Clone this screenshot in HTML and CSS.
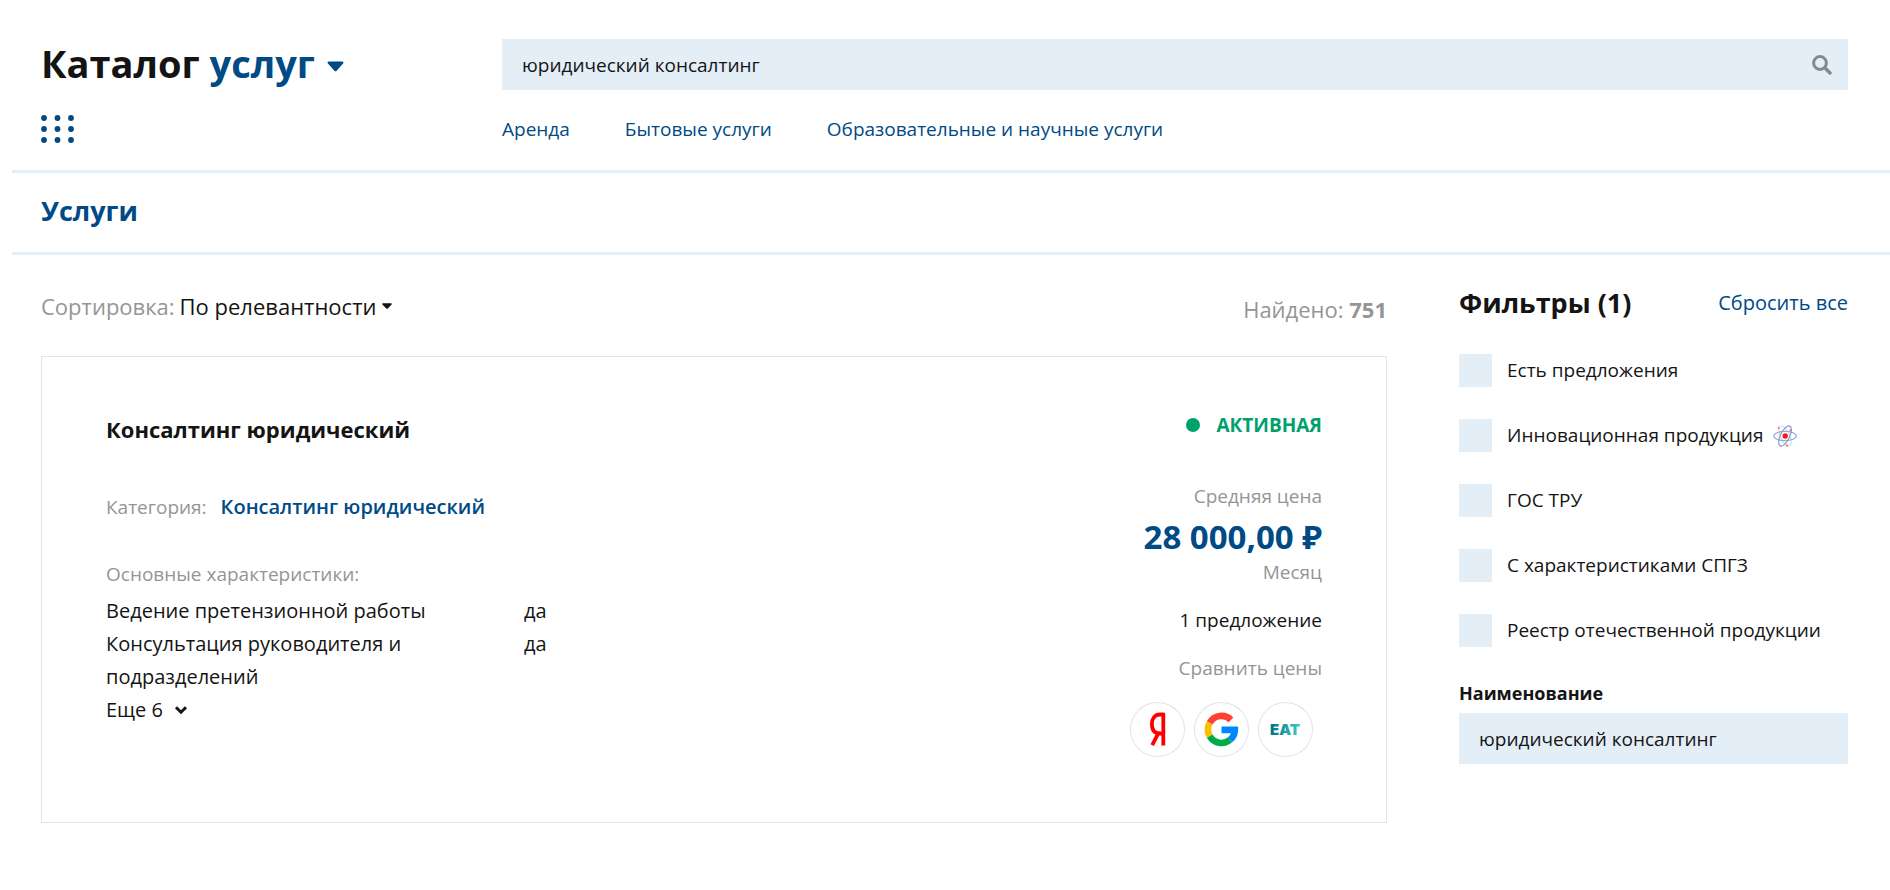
FILE: index.html
```
<!DOCTYPE html>
<html lang="ru">
<head>
  <meta charset="utf-8">
  <meta name="viewport" content="width=device-width, initial-scale=1">
  <title>Каталог услуг</title>
  <link rel="stylesheet" href="styles.css">
</head>
<body>
  <header class="header">
    <button class="brand" type="button">
      <span>Каталог <span class="brand-accent">услуг</span></span>
      <svg class="brand-caret" viewBox="0 0 17 11" aria-hidden="true"><path d="M1.8 .5h13.4c1.2 0 1.7 1.2.9 2L9.6 9.8c-.6.7-1.6.7-2.2 0L.9 2.5C.1 1.7.6.5 1.8.5z" fill="currentColor"/></svg>
    </button>
    <form class="search" role="search">
      <input class="search-input" type="search" aria-label="Поиск" value="юридический консалтинг">
      <button class="search-button" type="button" aria-label="Найти">
        <svg class="search-icon" viewBox="0 0 20 20" aria-hidden="true"><circle cx="8" cy="8" r="6.4" fill="none" stroke="currentColor" stroke-width="3"/><path d="M13 13l5 5" stroke="currentColor" stroke-width="3.4" stroke-linecap="round"/></svg>
      </button>
    </form>
    <button class="menu-button" type="button" aria-label="Все категории">
      <svg class="menu-icon" viewBox="0 0 33 28" fill="currentColor" aria-hidden="true">
        <circle cx="3" cy="3" r="2.900"/><circle cx="16.500" cy="3" r="2.900"/><circle cx="30" cy="3" r="2.900"/>
        <circle cx="3" cy="14" r="2.900"/><circle cx="16.500" cy="14" r="2.900"/><circle cx="30" cy="14" r="2.900"/>
        <circle cx="3" cy="25" r="2.900"/><circle cx="16.500" cy="25" r="2.900"/><circle cx="30" cy="25" r="2.900"/>
      </svg>
    </button>
    <nav class="nav">
      <a href="#">Аренда</a>
      <a href="#">Бытовые услуги</a>
      <a href="#">Образовательные и научные услуги</a>
    </nav>
  </header>

  <section class="section-bar">
    <h1 class="section-title">Услуги</h1>
  </section>

  <main class="content">
    <section class="results">
      <div class="toolbar">
        <div class="sort">
          <label class="muted" for="sort">Сортировка:</label>
          <select class="sort-select" id="sort">
            <option>По релевантности</option>
          </select>
          <svg class="sort-caret" viewBox="0 0 10 6" aria-hidden="true"><path d="M1 .3h8c.8 0 1.1.8.6 1.3L5.8 5.4c-.4.4-1.1.4-1.5 0L.4 1.6C-.1 1.1.2.3 1 .3z" fill="currentColor"/></svg>
        </div>
        <div class="found muted">Найдено: <strong>751</strong></div>
      </div>

      <article class="card">
        <div class="card-main">
          <h2 class="card-title">Консалтинг юридический</h2>
          <p class="category"><span class="muted">Категория:</span> <a class="category-link" href="#">Консалтинг юридический</a></p>
          <table class="specs">
            <caption class="muted">Основные характеристики:</caption>
            <tbody>
              <tr><th scope="row">Ведение претензионной работы</th><td>да</td></tr>
              <tr><th scope="row">Консультация руководителя и подразделений</th><td>да</td></tr>
            </tbody>
          </table>
          <button class="more" type="button">Еще 6
            <svg class="more-icon" viewBox="0 0 14 10" aria-hidden="true"><path d="M2 2.300L7 7.200 12 2.300" fill="none" stroke="currentColor" stroke-width="3"/></svg>
          </button>
        </div>

        <div class="card-side">
          <p class="status">АКТИВНАЯ</p>
          <p class="muted">Средняя цена</p>
          <p class="price">28 000,00 ₽</p>
          <p class="unit muted">Месяц</p>
          <p class="offers">1 предложение</p>
          <p class="muted">Сравнить цены</p>
          <div class="compare">
            <a class="compare-link" href="#" aria-label="Яндекс">
              <svg class="compare-logo" viewBox="0 0 55 55" aria-hidden="true"><path d="M33.300 10.800V43.600M33.500 12.500H30C24.800 12.500 21.900 16.500 21.900 22C21.900 28.500 25.200 31.500 30 31.500H33.500M28.200 31.500L22.200 43.200" fill="none" stroke="#f00" stroke-width="3.800"/></svg>
            </a>
            <a class="compare-link" href="#" aria-label="Google">
              <svg class="compare-logo" viewBox="0 0 55 55" aria-hidden="true">
                <g fill="none" stroke-width="6.600">
                  <path d="M37 17.900A13.400 13.400 0 0 0 15.700 20.900" stroke="#ff4131"/>
                  <path d="M15.700 20.900A13.400 13.400 0 0 0 15.700 34.100" stroke="#fdbd00"/>
                  <path d="M15.700 34.100A13.400 13.400 0 0 0 36 37.800" stroke="#00ac47"/>
                  <path d="M36 37.800C39.200 35.200 40.800 31.500 40.800 27.900H27.500" stroke="#0086ff"/>
                </g>
              </svg>
            </a>
            <a class="compare-link" href="#" aria-label="ЕАТ">
              <svg class="compare-logo" viewBox="0 0 55 55" aria-hidden="true">
                <defs><linearGradient id="eat"><stop offset="0" stop-color="#046f85"/><stop offset="1" stop-color="#3dccc4"/></linearGradient></defs>
                <text x="27" y="33" class="eat" fill="url(#eat)">ЕАТ</text>
              </svg>
            </a>
          </div>
        </div>
      </article>
    </section>

    <aside class="filters">
      <div class="filters-head">
        <h2 class="filters-title">Фильтры (1)</h2>
        <a class="reset" href="#">Сбросить все</a>
      </div>
      <div class="checks">
        <label class="check"><input type="checkbox">Есть предложения</label>
        <label class="check"><input type="checkbox">Инновационная продукция
          <svg class="atom" viewBox="0 0 24 24" aria-hidden="true">
            <g fill="none" stroke-width="1.200">
              <ellipse cx="12" cy="12" rx="4.600" ry="11" transform="rotate(-24 12 12)" stroke="#cfdeee"/>
              <ellipse cx="12" cy="12" rx="11.200" ry="4.600" stroke="#8fabcd"/>
              <ellipse cx="12" cy="12" rx="4.600" ry="11" transform="rotate(26 12 12)" stroke="#7f9fc6"/>
            </g>
            <circle cx="12.200" cy="12" r="2.700" fill="#f9160f"/>
            <circle cx="5.800" cy="4" r="1" fill="#f66"/><circle cx="17.500" cy="6" r="1" fill="#f66"/><circle cx="14" cy="21.500" r="1" fill="#f44"/>
          </svg>
        </label>
        <label class="check"><input type="checkbox">ГОС ТРУ</label>
        <label class="check"><input type="checkbox">С характеристиками СПГЗ</label>
        <label class="check"><input type="checkbox">Реестр отечественной продукции</label>
      </div>
      <label class="field-label" for="name">Наименование</label>
      <input class="field-input" id="name" type="text" value="юридический консалтинг">
    </aside>
  </main>
</body>
</html>
```
FILE: styles.css
```
*,
*::before,
*::after {
  box-sizing: border-box;
}

:root {
  --ink: #141414;
  --blue: #004a86;
  --tint: #e4eef7;
  --grey: #959595;
}

body {
  margin: 0;
  background: #fff;
  color: var(--ink);
  font: 19px/26px "Open Sans", "Noto Sans", sans-serif;
}

h1,
h2,
p {
  margin: 0;
}

a {
  color: var(--blue);
  text-decoration: none;
}

button,
input,
select {
  padding: 0;
  border: 0;
  border-radius: 0;
  background: none;
  color: inherit;
  font: inherit;
}

button,
select {
  cursor: pointer;
}

svg {
  display: block;
  flex: none;
}

.muted {
  color: var(--grey);
}

/* Header */

.header {
  display: grid;
  grid-template-columns: 461px 1fr;
  align-items: center;
  row-gap: 25px;
  padding: 39px 42px 27px 41px;
}

.brand {
  display: flex;
  align-items: center;
  gap: 12px;
  justify-self: start;
  padding-bottom: 4px;
  font-size: 38px;
  font-weight: 700;
  line-height: 46px;
}

.brand-accent,
.brand-caret {
  color: var(--blue);
}

.brand-caret {
  width: 17px;
  height: 11px;
  margin-top: 8px;
}

.search {
  display: flex;
  background: var(--tint);
}

.search-input {
  flex: 1;
  min-width: 0;
  height: 51px;
  padding-left: 20px;
  appearance: none;
}

.search-button {
  padding: 0 16px;
  color: #85898d;
}

.search-icon {
  width: 20px;
  height: 20px;
}

.menu-button {
  justify-self: start;
  color: var(--blue);
}

.menu-icon {
  width: 33px;
  height: 28px;
}

.nav {
  display: flex;
  gap: 55px;
}

.section-bar {
  margin-left: 12px;
  padding: 20px 29px 23px;
  border: solid var(--tint);
  border-width: 3px 0;
}

.section-title {
  color: var(--blue);
  font-size: 27px;
  line-height: 36px;
}

/* Results */

.content {
  display: grid;
  grid-template-columns: 1fr 389px;
  gap: 72px;
  padding: 30px 42px 68px 41px;
}

.toolbar {
  display: flex;
  align-items: flex-start;
  justify-content: space-between;
  padding-top: 4px;
  padding-bottom: 30px;
  font-size: 22px;
  line-height: 34px;
}

.sort {
  display: flex;
  align-items: center;
  gap: 5px;
}

.sort-select {
  appearance: none;
  line-height: 34px;
}

.sort-caret {
  width: 10px;
  height: 6px;
}

.found {
  padding-top: 3px;
}

.card {
  display: flex;
  justify-content: space-between;
  padding: 55px 64px 65px;
  border: 1px solid #dfe5ee;
}

.card-title {
  margin-bottom: 48px;
  font-size: 22px;
  line-height: 34px;
}

.category {
  display: flex;
  align-items: baseline;
  gap: 14px;
  margin-bottom: 41px;
}

.category-link {
  font-size: 20px;
  font-weight: 600;
}

.specs {
  border-collapse: collapse;
  font-size: 20px;
  line-height: 33px;
}

.specs caption {
  padding-bottom: 7px;
  font-size: 19px;
  line-height: 26px;
  text-align: left;
}

.specs th {
  width: 418px;
  padding: 0 90px 0 0;
  font-weight: 400;
  text-align: left;
}

.specs td {
  padding: 0;
  vertical-align: top;
}

.more {
  display: flex;
  align-items: center;
  gap: 11px;
  font-size: 20px;
  line-height: 33px;
}

.more-icon {
  width: 14px;
  height: 10px;
}

.card-side {
  text-align: right;
}

.status {
  display: flex;
  align-items: center;
  justify-content: flex-end;
  gap: 16px;
  margin-bottom: 45px;
  color: #00a06a;
  font-weight: 700;
}

.status::before {
  width: 14px;
  height: 14px;
  border-radius: 50%;
  background: currentColor;
  content: "";
}

.price {
  color: var(--blue);
  font-size: 33px;
  font-weight: 700;
  line-height: 56px;
}

.unit,
.offers {
  margin-bottom: 22px;
}

.unit {
  margin-top: -6px;
}

.compare {
  display: flex;
  justify-content: flex-end;
  gap: 9px;
  padding: 21px 9px 0 0;
}

.compare-link {
  width: 55px;
  height: 55px;
  border-radius: 50%;
  box-shadow: inset 0 0 0 1px #dfe4e8;
}

.compare-logo {
  width: 55px;
  height: 55px;
}

.eat {
  font: 900 15px Inter, "Open Sans", sans-serif;
  text-anchor: middle;
}

/* Filters */

.filters-head {
  display: flex;
  align-items: center;
  justify-content: space-between;
  margin-bottom: 33px;
}

.filters-title {
  font-size: 27px;
  line-height: 36px;
}

.reset {
  font-size: 20px;
}

.checks {
  display: flex;
  flex-direction: column;
  gap: 32px;
  margin-bottom: 33px;
}

.check {
  display: flex;
  align-items: center;
  line-height: 33px;
}

.check input {
  width: 33px;
  height: 33px;
  margin: 0 15px 0 0;
  background: var(--tint);
  appearance: none;
}

.check input:checked {
  background: var(--blue);
}

.atom {
  width: 24px;
  height: 24px;
  margin-left: 10px;
}

.field-label {
  display: block;
  margin-bottom: 7px;
  font-size: 18px;
  font-weight: 700;
}

.field-input {
  width: 100%;
  height: 51px;
  padding: 0 20px;
  background: var(--tint);
}
```
